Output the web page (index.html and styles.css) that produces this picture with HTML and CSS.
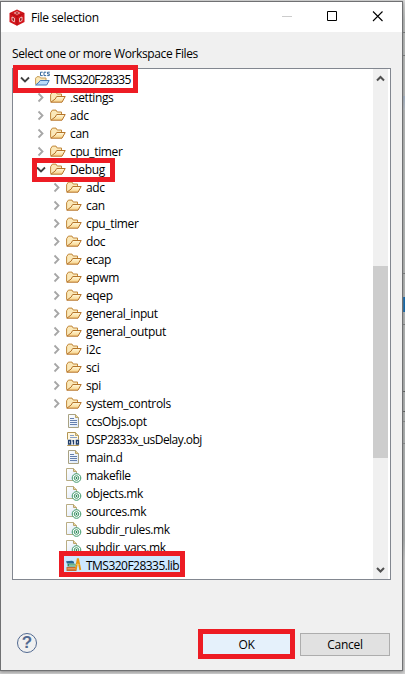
FILE: index.html
```html
<!DOCTYPE html>
<html lang="en">
<head>
<meta charset="utf-8">
<title>File selection</title>
<link rel="stylesheet" href="styles.css">
</head>
<body>
<svg class="defs" width="0" height="0">
  <defs>
    <linearGradient id="gold" x1="0" y1="0" x2="0" y2="1"><stop offset="0" stop-color="#fffbe0"/><stop offset="1" stop-color="#f7cf82"/></linearGradient>
    <linearGradient id="sheet" x1="0" y1="0" x2="1" y2="1"><stop offset="0" stop-color="#fff"/><stop offset="1" stop-color="#dce8f8"/></linearGradient>
  </defs>
  <symbol id="closed" viewBox="0 0 10 12"><path d="M2.5 2.5 6.5 6.5 2.5 10.5" fill="none" stroke="#a6a6a6" stroke-width="1.8"/></symbol>
  <symbol id="opened" viewBox="0 0 10 12"><path d="M1 4.5 5 8.5 9 4.5" fill="none" stroke="#404040" stroke-width="1.8"/></symbol>
  <symbol id="folder" viewBox="0 0 16 16">
    <path d="M.6 12.7V5.7L2.4 3.1H6L7.2 5H11.5V7.5" fill="#fbe8b8" stroke="#c1873a"/>
    <path d="M.8 13.2 5.2 10 6.7 7.5H15.2L12 13.2Z" fill="url(#gold)" stroke="#b5742a"/>
  </symbol>
  <symbol id="project" viewBox="0 0 16 16">
    <path d="M1.6 13.5V7.2L3 5.7H5.5L6.5 7H12V9.5" fill="#fbe8b8" stroke="#c59a50"/>
    <path d="M1.6 14 5 11.2 6.2 9.5H15.2L12.7 14Z" fill="#b9dcfa" stroke="#4678b4"/>
    <path d="M8.7 1.2H6.5V4.6H8.7M12.2 1.2H10V4.6H12.2M15.8 1.2H13.5V2.9H15.3V4.6H13.2" fill="none" stroke="#36699b"/>
  </symbol>
  <symbol id="text" viewBox="0 0 16 16">
    <path d="M2.5 1.5H9.5L12.5 4.5V14.5H2.5Z" fill="url(#sheet)" stroke="#a9a283"/><path d="M9.5 1.5V4.5H12.5" fill="#e9d59c" stroke="#b8a36c"/>
    <path d="M4 5.5H8M4 7.5H11M4 9.5H11M4 11.5H11" stroke="#647fae"/>
  </symbol>
  <symbol id="object" viewBox="0 0 16 16">
    <path d="M1.5 1.5H9.5L12.5 4.5V14.5H1.5Z" fill="#fff8e4" stroke="#b29553"/><path d="M9.5 1.5V4.5H12.5" fill="#e9d59c" stroke="#b8a36c"/>
    <path d="M4 4.5H8M4 6.5H11" stroke="#87a0c8"/>
    <path d="M1 8.5H14V14H1Z" fill="#f2f4f6"/>
    <path d="M2.6 9.5H4.6V13H2.6ZM7.5 9V13.6M6.3 9.8H7.5M10.4 9.5H12.4V13H10.4Z" fill="none" stroke="#213e6a" stroke-width="1.3"/>
  </symbol>
  <symbol id="make" viewBox="0 0 16 16">
    <path d="M.5 1.5H7.5L10.5 4.5V13.5H.5Z" fill="url(#sheet)" stroke="#b9ad84"/><path d="M7.5 1.5V4.5H10.5" fill="#e9d59c" stroke="#b8a36c"/>
    <circle cx="10.5" cy="11" r="4.3" fill="#fff" stroke="#3c9668"/><circle cx="10.5" cy="11" r="2.3" fill="none" stroke="#3c9668"/><circle cx="10.5" cy="11" r=".9" fill="#207c4c"/>
  </symbol>
  <symbol id="library" viewBox="0 0 16 16">
    <path d="M0 4.3 6 3.8 8 4.7V6.5H1Z" fill="#27658f"/><path d="M1.5 6.7H9.5V9.5H1.5Z" fill="#2b8c5c"/><path d="M3 8.1H9" stroke="#c9eacb"/>
    <path d="M.5 10H10.5V14H.5Z" fill="#c46832"/><path d="M1.5 11.8H10" stroke="#f2b36d"/>
    <path d="M9.8 12.5 11.8 1.5M12 1.5 14.3 13" stroke="#e69712" stroke-width="1.8"/><path d="M10.2 7.5H13.4" stroke="#f7c44e"/>
  </symbol>
</svg>

<main class="dialog">
  <header class="titlebar">
    <svg class="logo" viewBox="0 0 16 17"><path d="M8 .5 15.5 4V13L8 16.8.5 13V4Z" fill="#d2151b"/><path d="M1 4.4 8 7.8 15 4.4M8 7.8V16.3" stroke="#a50b10" stroke-width=".8" fill="none"/><path d="M5.2 4 8 2.7 10.8 4 8 5.3Z" fill="#870509" stroke="#f3aaa6" stroke-width=".9"/><path d="M3 8 5.4 9.2V12.8L3 11.5ZM13 8 10.6 9.2V12.8L13 11.5Z" fill="#870509" stroke="#ffd6d3" stroke-width=".9"/></svg>
    <h1 class="title">File selection</h1>
    <svg class="controls" viewBox="0 0 102 12"><path d="M0 5.5H10" stroke="#ccc"/><path d="M45.5.5H54.5V9.5H45.5Z" fill="none" stroke="#000"/><path d="M91 .5 100.5 10M100.5 .5 91 10" stroke="#000" stroke-width="1.1"/></svg>
  </header>
  <p class="prompt">Select one or more Workspace Files</p>
  <section class="browser">
    <ul class="tree">
      <li class="row root marked"><svg class="arrow"><use href="#opened"/></svg><svg class="icon"><use href="#project"/></svg><span class="caps">TMS320F28335</span></li>
      <li class="row top"><svg class="arrow"><use href="#closed"/></svg><svg class="icon"><use href="#folder"/></svg><span>.settings</span></li>
      <li class="row top"><svg class="arrow"><use href="#closed"/></svg><svg class="icon"><use href="#folder"/></svg><span>adc</span></li>
      <li class="row top"><svg class="arrow"><use href="#closed"/></svg><svg class="icon"><use href="#folder"/></svg><span>can</span></li>
      <li class="row top"><svg class="arrow"><use href="#closed"/></svg><svg class="icon"><use href="#folder"/></svg><span>cpu_timer</span></li>
      <li class="row top marked"><svg class="arrow"><use href="#opened"/></svg><svg class="icon"><use href="#folder"/></svg><span>Debug</span></li>
      <li class="row"><svg class="arrow"><use href="#closed"/></svg><svg class="icon"><use href="#folder"/></svg><span>adc</span></li>
      <li class="row"><svg class="arrow"><use href="#closed"/></svg><svg class="icon"><use href="#folder"/></svg><span>can</span></li>
      <li class="row"><svg class="arrow"><use href="#closed"/></svg><svg class="icon"><use href="#folder"/></svg><span>cpu_timer</span></li>
      <li class="row"><svg class="arrow"><use href="#closed"/></svg><svg class="icon"><use href="#folder"/></svg><span>doc</span></li>
      <li class="row"><svg class="arrow"><use href="#closed"/></svg><svg class="icon"><use href="#folder"/></svg><span>ecap</span></li>
      <li class="row"><svg class="arrow"><use href="#closed"/></svg><svg class="icon"><use href="#folder"/></svg><span>epwm</span></li>
      <li class="row"><svg class="arrow"><use href="#closed"/></svg><svg class="icon"><use href="#folder"/></svg><span>eqep</span></li>
      <li class="row"><svg class="arrow"><use href="#closed"/></svg><svg class="icon"><use href="#folder"/></svg><span>general_input</span></li>
      <li class="row"><svg class="arrow"><use href="#closed"/></svg><svg class="icon"><use href="#folder"/></svg><span>general_output</span></li>
      <li class="row"><svg class="arrow"><use href="#closed"/></svg><svg class="icon"><use href="#folder"/></svg><span>i2c</span></li>
      <li class="row"><svg class="arrow"><use href="#closed"/></svg><svg class="icon"><use href="#folder"/></svg><span>sci</span></li>
      <li class="row"><svg class="arrow"><use href="#closed"/></svg><svg class="icon"><use href="#folder"/></svg><span>spi</span></li>
      <li class="row"><svg class="arrow"><use href="#closed"/></svg><svg class="icon"><use href="#folder"/></svg><span>system_controls</span></li>
      <li class="row"><svg class="arrow"></svg><svg class="icon"><use href="#text"/></svg><span>ccsObjs.opt</span></li>
      <li class="row"><svg class="arrow"></svg><svg class="icon"><use href="#object"/></svg><span class="mixed">DSP2833x_usDelay.obj</span></li>
      <li class="row"><svg class="arrow"></svg><svg class="icon"><use href="#text"/></svg><span>main.d</span></li>
      <li class="row"><svg class="arrow"></svg><svg class="icon"><use href="#make"/></svg><span>makefile</span></li>
      <li class="row"><svg class="arrow"></svg><svg class="icon"><use href="#make"/></svg><span>objects.mk</span></li>
      <li class="row"><svg class="arrow"></svg><svg class="icon"><use href="#make"/></svg><span>sources.mk</span></li>
      <li class="row"><svg class="arrow"></svg><svg class="icon"><use href="#make"/></svg><span>subdir_rules.mk</span></li>
      <li class="row"><svg class="arrow"></svg><svg class="icon"><use href="#make"/></svg><span>subdir_vars.mk</span></li>
      <li class="row selected marked"><svg class="arrow"></svg><svg class="icon"><use href="#library"/></svg><span class="mixed">TMS320F28335.lib</span></li>
    </ul>
    <div class="scrollbar">
      <svg class="scroll-arrow" viewBox="0 0 15 17"><path d="M4 11.5 7.5 8 11 11.5" fill="none" stroke="#505050" stroke-width="2"/></svg>
      <div class="thumb"></div>
      <svg class="scroll-arrow end" viewBox="0 0 15 17"><path d="M4 6 7.5 9.5 11 6" fill="none" stroke="#505050" stroke-width="2"/></svg>
    </div>
  </section>
  <footer class="actions">
    <div class="help">?</div>
    <button class="button ok">OK</button>
    <button class="button cancel">Cancel</button>
  </footer>
</main>
</body>
</html>
```
FILE: styles.css
```css
* { box-sizing: border-box; }
body {
  margin: 0; height: 674px; overflow: hidden; padding-top: 1px;
  background:
    linear-gradient(#0060aa, #0060aa) 403px 297px / 2px 15px no-repeat,
    linear-gradient(#9fb0c4, #b9bfc6) 403px 96px / 2px 14px no-repeat,
    linear-gradient(#707373, #707373) 403px 32px / 2px 1px no-repeat,
    linear-gradient(#707373, #707373) 403px 55px / 2px 1px no-repeat,
    linear-gradient(#707373, #707373) 403px 273px / 2px 1px no-repeat,
    linear-gradient(#707373, #707373) 403px 324px / 2px 1px no-repeat,
    linear-gradient(#505353, #505353) 403px 391px / 2px 1px no-repeat,
    linear-gradient(#505353, #505353) 403px 411px / 2px 1px no-repeat,
    linear-gradient(#808383, #808383) 403px 421px / 2px 1px no-repeat,
    linear-gradient(#808383, #808383) 403px 443px / 2px 1px no-repeat,
    linear-gradient(#d9d9d9, #b8bbba 20px, #b3b6b5 260px, #aaaeae 540px, #c8c8c8 560px, #d0d0d0);
  font: 12px/18px "Open Sans", "Noto Sans", sans-serif; color: #000;
}
.defs { position: absolute; }
.dialog {
  width: 403px; height: 670px; border: 1px solid #707173; background: #f0f0f0;
  display: flex; flex-direction: column; box-shadow: 0 1px 3px #888;
}
.titlebar { height: 30px; flex: none; background: #fff; display: flex; align-items: center; padding-left: 8px; }
.logo { width: 16px; height: 17px; }
.title { margin: 0 0 0 6px; font-size: 12px; font-weight: 400; letter-spacing: -.3px; width: 251px; padding-top: 1px; }
.controls { width: 102px; height: 12px; flex: none; }
.prompt { margin: 13px 0 0 11px; height: 23px; line-height: 18px; letter-spacing: -.37px; flex: none; }
.browser { height: 512px; flex: none; margin: 0 11px; border: 1px solid #828790; background: #fff; display: flex; }
.tree { margin: 0; padding: 1px 0 0; list-style: none; flex: 1; }
.row { height: 18px; display: flex; align-items: center; padding-left: 39px; letter-spacing: -.37px; position: relative; white-space: nowrap; }
.row span { padding-top: 1px; }
.row.top { padding-left: 23px; }
.row.root { padding-left: 7px; }
.row .caps { letter-spacing: -.7px; }
.row .mixed { letter-spacing: -.53px; }
.arrow { width: 10px; height: 12px; margin-right: 4px; flex: none; }
.icon { width: 16px; height: 16px; margin-right: 4px; flex: none; }
.marked::after { content: ""; position: absolute; z-index: 1; box-sizing: border-box; border: 5px solid #ed1c24; }
.root.marked::after { left: 0; top: -5px; width: 125px; height: 28px; }
.top.marked::after { left: 19px; top: -2px; width: 83px; height: 24px; }
.selected.marked::after { left: 46px; top: -5px; width: 126px; height: 26px; }
.selected { background: linear-gradient(#cce8ff, #cce8ff) 51px 0 / 119px 18px no-repeat; }
.scrollbar { width: 15px; margin-right: 2px; background: #f0f0f0; display: flex; flex-direction: column; }
.scroll-arrow { width: 15px; height: 17px; }
.thumb { height: 192px; margin-top: 180px; background: #cdcdcd; }
.end { margin-top: auto; }
.actions { flex: 1; display: flex; align-items: flex-start; padding: 49px 11px 0 16px; }
.help { width: 20px; height: 20px; margin-top: 4px; border: 1px solid #526a91; border-radius: 50%; font: bold 17px/18px "Liberation Sans", sans-serif; color: #526a91; text-align: center; }
.button { font: inherit; padding: 0; letter-spacing: -.3px; border-radius: 0; color: #000; }
.ok { margin-left: 161px; width: 97px; height: 30px; border: 5px solid #ed1c24; background: #e5f1fb; line-height: 20px; padding-top: 1px; }
.cancel { margin: 4px 0 0 5px; width: 90px; height: 23px; border: 1px solid #adadad; background: #e1e1e1; }
```
